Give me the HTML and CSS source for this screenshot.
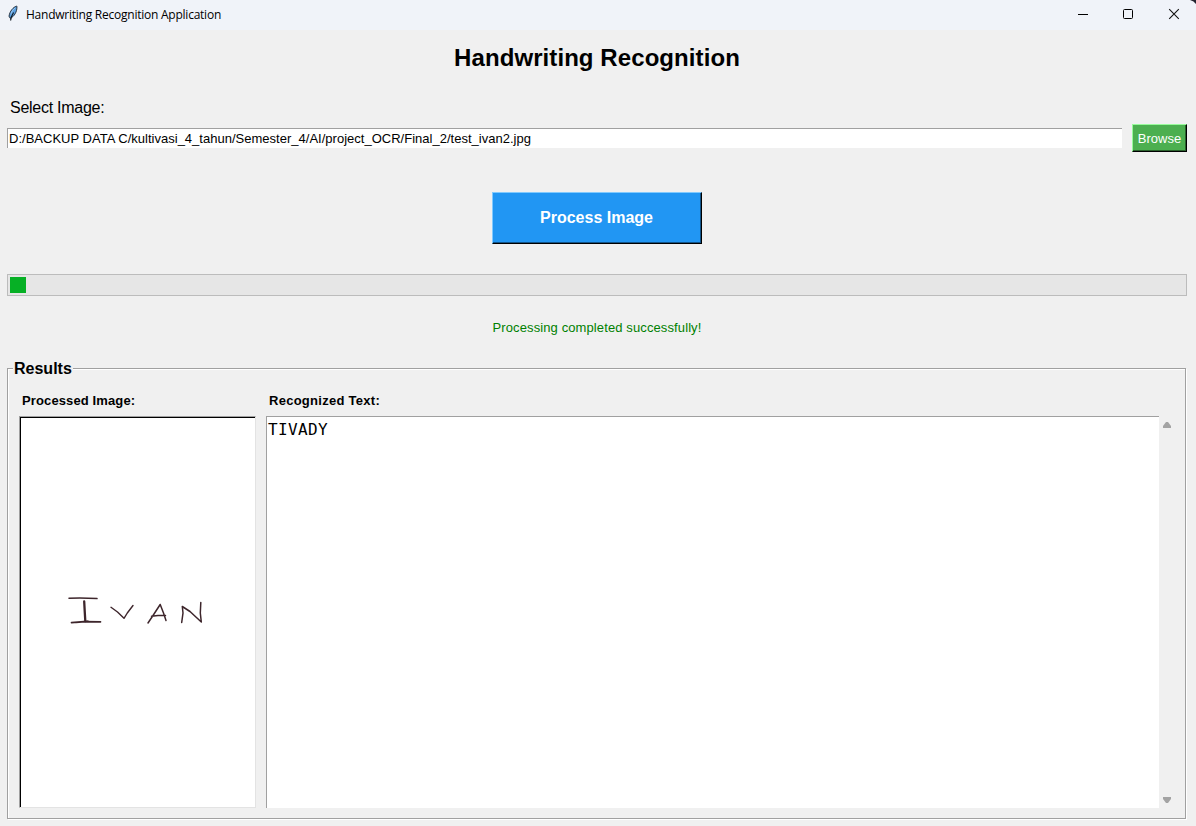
FILE: index.html
```html
<!DOCTYPE html>
<html lang="en">
<head>
<meta charset="utf-8">
<title>Handwriting Recognition Application</title>
<link rel="stylesheet" href="styles.css">
</head>
<body>
<div class="window">
  <header class="titlebar">
    <svg class="feather" width="14" height="18" viewBox="0 0 14 18">
      <path d="M10.600 1C7 2.400 3.900 6 3 11.200L4.300 13.400C7.900 11.600 11.200 7 10.900 1.600Z" fill="#5a9fe0" stroke="#16202c" stroke-width=".9"/>
      <path d="M7.600 7.500C6 10 4.800 12 4.600 15.500" fill="none" stroke="#101820" stroke-width="1.200"/>
      <path d="M9 3C7 4.500 5.600 6.600 5 8.800" fill="none" stroke="#a5cdf1" stroke-width=".9"/>
    </svg>
    <span class="caption">Handwriting Recognition Application</span>
    <svg class="controls" width="138" height="30" viewBox="0 0 138 30">
      <path d="M20 14.500h10" stroke="#000"/>
      <rect x="65.500" y="9.500" width="9" height="9" rx="1" fill="none" stroke="#000"/>
      <path d="M111.200 9.200l9.600 9.600M120.800 9.200l-9.600 9.600" stroke="#111" stroke-width="1.100"/>
    </svg>
    <svg class="corner" width="8" height="4" viewBox="0 0 8 4"><path d="M2 0h6v4Q6 1 2 0Z" fill="#23232f"/></svg>
  </header>
  <main class="content">
    <h1 class="title"><span class="title-text">Handwriting Recognition</span></h1>
    <div class="select-label"><span class="select-text">Select Image:</span></div>
    <div class="file-row">
      <div class="entry"><span class="path">D:/BACKUP DATA C/kultivasi_4_tahun/Semester_4/AI/project_OCR/Final_2/test_ivan2.jpg</span></div>
      <button class="browse">Browse</button>
    </div>
    <button class="process">Process Image</button>
    <div class="progress"><div class="chunk"></div></div>
    <div class="status"><span class="status-text">Processing completed successfully!</span></div>
    <section class="results">
      <h2 class="legend">Results</h2>
      <div class="panes">
        <div class="image-pane">
          <h3 class="pane-title processed-title">Processed Image:</h3>
          <div class="image-box">
            <svg width="150" height="40" viewBox="63 592 150 40" fill="none" stroke="#3d252b" stroke-width="1.400" stroke-linecap="round" stroke-linejoin="round">
              <path d="M69 598.200Q82 597.400 97 598.600" stroke-width="1.500"/>
              <path d="M84.200 601.500L84.700 611L85.300 621" stroke-width="2.300"/>
              <path d="M71.500 622.700L84 621.700L100.500 621.800M76 622.500L88 621.300" stroke-width="1.700"/>
              <path d="M111 607.300L117.500 612L124 618.300L127.300 613L133 605.500"/>
              <path d="M148 623L154 614L160.200 604.500L163.500 613L166 620.500M151.500 616.200L158 615.600L165.500 615.500" stroke-width="1.500"/>
              <path d="M181.700 622.500L183 613L182.300 606.500L190 611.500L201.300 622L200.300 613L200.800 602.500" stroke-width="1.500"/>
            </svg>
          </div>
        </div>
        <div class="text-pane">
          <h3 class="pane-title recognized-title">Recognized Text:</h3>
          <div class="text-row">
            <div class="text-box"><span class="recognized">TIVADY</span></div>
            <div class="scrollbar">
              <svg width="8" height="6" viewBox="0 0 8 6"><path d="M0 6V4L3 0h2L8 4V6Z" fill="#a3a3a3"/></svg>
              <svg width="8" height="6" viewBox="0 0 8 6"><path d="M0 0V2L3 6h2L8 2V0Z" fill="#a3a3a3"/></svg>
            </div>
          </div>
        </div>
      </div>
    </section>
  </main>
</div>
</body>
</html>
```
FILE: styles.css
```css
* { box-sizing: border-box; }
body { margin: 0; background: #f0f0f0; color: #000; font-family: "Liberation Sans", Arial, sans-serif; }
h1, h2, h3 { margin: 0; }
button { font-family: inherit; padding: 0; border-radius: 0; white-space: nowrap; }
.window { width: 1196px; height: 826px; overflow: hidden; display: flex; flex-direction: column; }
.titlebar { position: relative; flex: none; height: 30px; display: flex; align-items: flex-start; background: #f0f3f9; }
.feather { margin: 5px 0 0 6px; }
.caption { flex: 1; margin-left: 6px; font: 12px/30px "Open Sans", "Noto Sans", sans-serif; letter-spacing: -0.24px; white-space: nowrap; }
.controls { flex: none; }
.corner { position: absolute; top: 0; right: 0; }
.content { flex: 1; display: flex; flex-direction: column; padding: 0 9px 6px 7px; }
.title { height: 56px; text-align: center; font-size: 24px; line-height: 56px; }
.title-text { letter-spacing: 0.08px; }
.select-label { height: 38px; padding: 13px 0 0 3px; font-size: 16px; line-height: 18px; letter-spacing: -0.27px; }
.file-row { display: flex; align-items: center; justify-content: space-between; height: 28px; }
.entry { width: 1115px; height: 20px; background: #fff; border-top: 1px solid #a0a0a0; border-left: 1px solid #a0a0a0; padding-left: 1px; font-size: 13px; line-height: 20px; letter-spacing: 0.012px; white-space: nowrap; }
.browse { width: 55px; height: 28px; background: #4caf50; color: #fff; font-size: 13px; border: 1px solid #98fb9c; border-right-color: #000; border-bottom-color: #000; box-shadow: inset -1px -1px #2b622d; }
.process { align-self: center; width: 210px; height: 52px; margin: 40px 0 30px; padding-right: 1px; background: #2196f3; color: #fff; font-size: 16px; font-weight: bold; border: 1px solid #80caff; border-right-color: #000; border-bottom-color: #000; box-shadow: inset -1px -1px #125489; }
.progress { flex: none; height: 22px; padding: 2px; background: #e6e6e6; border: 1px solid #bcbcbc; }
.chunk { width: 16px; height: 16px; background: #06b025; }
.status { height: 63px; text-align: center; font-size: 13px; line-height: 63px; color: #008000; letter-spacing: 0.11px; }
.results { flex: none; width: 1179px; height: 451px; margin-top: 9px; border: 1px solid #a0a0a0; box-shadow: inset 1px 1px #fff, 1px 1px #fff; }
.legend { width: 60px; height: 20px; margin: -11px 0 0 5px; padding-left: 1px; background: #f0f0f0; font-size: 16px; line-height: 22px; white-space: nowrap; }
.panes { display: flex; gap: 10px; padding: 14px 0 0 11px; }
.image-pane { width: 237px; }
.pane-title { height: 24px; padding-left: 3px; font-size: 13px; line-height: 18px; white-space: nowrap; }
.processed-title { letter-spacing: 0.12px; }
.recognized-title { letter-spacing: 0.27px; }
.image-box { height: 392px; display: flex; align-items: center; justify-content: center; background: #fff; border: 1px solid #e3e3e3; border-top-color: #a0a0a0; border-left-color: #a0a0a0; box-shadow: inset 1px 1px #000; }
.text-pane { width: 913px; }
.text-row { display: flex; height: 392px; }
.text-box { width: 893px; background: #fff; border-top: 1px solid #a0a0a0; border-left: 1px solid #a0a0a0; padding: 3px 0 0 1px; font: 16px/19px "DejaVu Sans Mono", monospace; }
.recognized { letter-spacing: 0.37px; }
.scrollbar { display: flex; flex-direction: column; justify-content: space-between; padding: 6px 4px 5px; }
```
